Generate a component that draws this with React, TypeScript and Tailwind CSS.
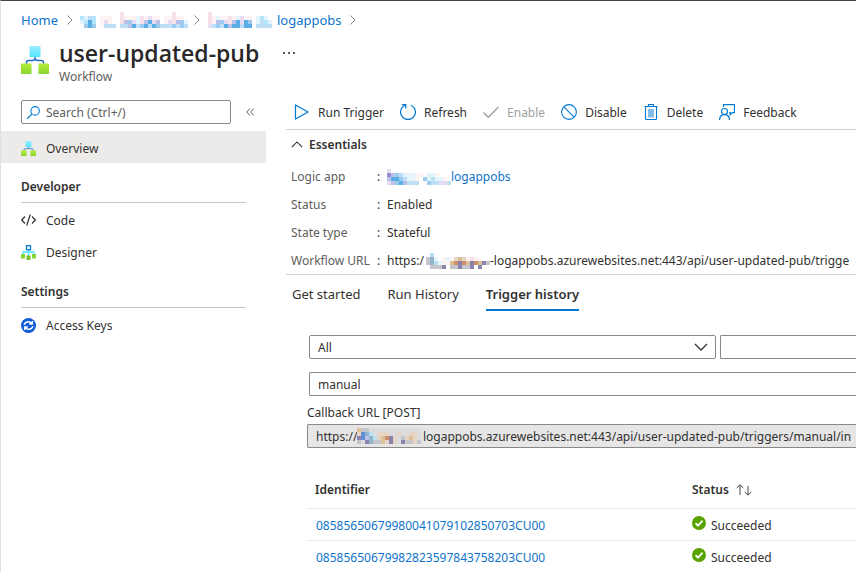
import type { ReactNode } from "react";

const swatches: Record<string, string> = {
  a: "#bcdff6",
  b: "#5aaee6",
  c: "#9ccbed",
  d: "#e2f5fd",
  e: "#fdf3f3",
  f: "#e6dcf3",
  g: "#f8e0e8",
  h: "#b4e6fa",
  i: "#bcc1ea",
  j: "#9a8ad6",
  k: "#dcbf94",
  l: "#8d82ac",
  m: "#cf8f68",
  n: "#c4c6cc",
  o: "#5f8fd0",
  p: "#e6d5c4",
  q: "#8fb4cc",
  r: "#dcdcdf",
};

function Redacted({ rows }: { rows: string[] }) {
  const width = rows[0].length * 4;
  const height = rows.length * 4;
  return (
    <svg
      width={width}
      height={height}
      viewBox={`0 0 ${width} ${height}`}
      shapeRendering="crispEdges"
      className="shrink-0"
      aria-hidden="true"
    >
      {rows.map((row, y) =>
        row
          .split("")
          .map((key, x) =>
            swatches[key] ? (
              <rect key={`${x}-${y}`} x={x * 4} y={y * 4} width={4} height={4} fill={swatches[key]} />
            ) : null,
          ),
      )}
    </svg>
  );
}

function WorkflowIcon({ size }: { size: number }) {
  return (
    <svg width={size} height={size} viewBox="0 0 28 28" className="shrink-0" aria-hidden="true">
      <defs>
        <linearGradient id="wfBlue" x1="0" y1="0" x2="0" y2="1">
          <stop offset="0" stopColor="#9cebff" />
          <stop offset="1" stopColor="#50e6ff" />
        </linearGradient>
        <linearGradient id="wfGreen" x1="0" y1="0" x2="0" y2="1">
          <stop offset="0" stopColor="#b4ec36" />
          <stop offset="1" stopColor="#86d633" />
        </linearGradient>
      </defs>
      <path
        d="M14 10v4M5.500 18v-1.500q0-2 2-2h3.500q2 0 3-1.500q1 1.500 3 1.500h3.500q2 0 2 2V18"
        fill="none"
        stroke="#1f6fc0"
        strokeWidth="1.500"
      />
      <rect x="8.500" y="0" width="11" height="11" rx="0.500" fill="url(#wfBlue)" />
      <rect x="0" y="17.500" width="10.500" height="10.500" rx="0.500" fill="url(#wfGreen)" />
      <rect x="17.500" y="17.500" width="10.500" height="10.500" rx="0.500" fill="url(#wfGreen)" />
    </svg>
  );
}

function Crumb() {
  return (
    <svg width="6" height="10" viewBox="0 0 6 10" className="shrink-0" aria-hidden="true">
      <path d="M0.500 0.500L5 5L0.500 9.500" fill="none" stroke="#8a8886" />
    </svg>
  );
}

function ToolIcon({ children, color = "#0078d4" }: { children: ReactNode; color?: string }) {
  return (
    <svg width="16" height="16" viewBox="0 0 16 16" fill="none" stroke={color} className="shrink-0" aria-hidden="true">
      {children}
    </svg>
  );
}

const tools = [
  {
    label: "Run Trigger",
    icon: (
      <ToolIcon>
        <path d="M1.500 1L14 8L1.500 15Z" strokeWidth="1.200" />
      </ToolIcon>
    ),
  },
  {
    label: "Refresh",
    icon: (
      <ToolIcon>
        <path d="M11 1.200A7.400 7.400 0 1 1 5 1.200M2 .7h3.800v3.800" strokeWidth="1.200" />
      </ToolIcon>
    ),
  },
  {
    label: "Enable",
    disabled: true,
    icon: (
      <ToolIcon color="#a19f9d">
        <path d="M.5 8.500L5.300 13.300L15.500 3" strokeWidth="1.400" />
      </ToolIcon>
    ),
  },
  {
    label: "Disable",
    icon: (
      <ToolIcon>
        <circle cx="8" cy="8" r="7.400" strokeWidth="1.100" />
        <path d="M2.800 2.800L13.200 13.200" strokeWidth="1.100" />
      </ToolIcon>
    ),
  },
  {
    label: "Delete",
    icon: (
      <ToolIcon>
        <rect x="5" y="5" width="6" height="8.500" fill="#83bbe9" stroke="none" />
        <path d="M1.500 2.500h13M5.500 2V.5h5V2M2.500 2.500v12q0 1 1 1h9q1 0 1-1v-12" strokeWidth="1.100" />
      </ToolIcon>
    ),
  },
  {
    label: "Feedback",
    icon: (
      <ToolIcon>
        <circle cx="5.500" cy="7.500" r="3" strokeWidth="1.200" />
        <path d="M.6 16q0-5.300 4.900-5.300T10.400 16M4.500 3V.6h11v8h-2l-2.300 2V8.600H10" strokeWidth="1.200" />
      </ToolIcon>
    ),
  },
];

function Chevron({ className, d }: { className?: string; d: string }) {
  return (
    <svg width="14" height="8" viewBox="0 0 14 8" className={className} aria-hidden="true">
      <path d={d} fill="none" stroke="#323130" strokeWidth="1.300" />
    </svg>
  );
}

function NavItem({ icon, label, active }: { icon: ReactNode; label: string; active?: boolean }) {
  return (
    <a
      href="#"
      className={
        active
          ? "flex h-8 items-center gap-[10px] bg-[#edebe9] pt-[2px] pl-5"
          : "flex h-8 items-center gap-[10px] pl-5"
      }
    >
      {icon}
      <span className="pt-[2px]">{label}</span>
    </a>
  );
}

function NavHeading({ children }: { children: ReactNode }) {
  return (
    <h2 className="mr-5 mb-px ml-5 border-b border-[#c8c6c4] pt-[14px] pb-[5px] leading-5 font-semibold">{children}</h2>
  );
}

function Property({ name, children }: { name: string; children: ReactNode }) {
  return (
    <div className="flex h-7 items-center pt-[2px]">
      <dt className="w-[86px] shrink-0 whitespace-nowrap text-[#605e5c]">{name}</dt>
      <dd className="flex items-center whitespace-nowrap">
        <span className="w-[10px]">:</span>
        {children}
      </dd>
    </div>
  );
}

const runs = ["08585650679980041079102850703CU00", "08585650679982823597843758203CU00"];

export default function App() {
  return (
    <div className="min-h-screen overflow-hidden border-t border-l border-t-[#444444] border-l-[#e1dfdd] bg-white font-['Noto_Sans','Open_Sans',sans-serif] text-[12px] leading-4 text-[#323130]">
      <header className="px-5">
        <nav aria-label="Breadcrumb" className="flex h-9 items-center pt-[2px] text-[13px] text-[#0f74cc]">
          <a href="#" className="w-[46px]">
            Home
          </a>
          <Crumb />
          <a href="#" aria-label="Resource group" className="mr-[6px] ml-[7px]">
            <Redacted
              rows={[
                "..........g............g...",
                "hdah.eee..geeedgefee.eegee.",
                "dhbh.efe..gicfdgibfi.efgicd",
                ".cbc.eaaa.aaibacbabcaaacaca",
              ]}
            />
          </a>
          <Crumb />
          <a href="#" className="flex items-center gap-[5px] pr-2 pl-2">
            <Redacted rows={["g...............", "gedeegedfee.dhd.", "geicfgibfbc.dahd", "facabibbabb.aaaa"]} />
            logappobs
          </a>
          <Crumb />
        </nav>
        <div className="flex h-[58px] items-start gap-[10px]">
          <div className="pt-[9px]">
            <WorkflowIcon size={28} />
          </div>
          <div>
            <h1 className="font-['Open_Sans','Noto_Sans',sans-serif] text-[23px] leading-8 font-semibold text-[#292827]">
              user-updated-pub
            </h1>
            <p className="text-[#605e5c]">Workflow</p>
          </div>
          <button type="button" aria-label="More" className="ml-[14px] flex gap-[3px] pt-[15px]">
            <span className="size-[2px] bg-[#605e5c]" />
            <span className="size-[2px] bg-[#605e5c]" />
            <span className="size-[2px] bg-[#605e5c]" />
          </button>
        </div>
      </header>

      <div className="flex">
        <aside className="w-[265px] shrink-0 pt-[5px]">
          <div className="mb-[7px] flex items-center pl-5">
            <label className="flex h-6 w-[210px] items-center gap-[6px] rounded-[2px] border border-[#8a8886] px-[5px]">
              <svg
                width="13"
                height="13"
                viewBox="0 0 12 12"
                fill="none"
                stroke="#0078d4"
                className="shrink-0"
                aria-hidden="true"
              >
                <circle cx="7.500" cy="4.500" r="3.900" />
                <path d="M4.700 7.300L.4 11.600" strokeWidth="1.200" />
              </svg>
              <input
                type="text"
                aria-label="Search"
                placeholder="Search (Ctrl+/)"
                className="w-full pt-[2px] outline-none placeholder:text-[#605e5c]"
              />
            </label>
            <button type="button" aria-label="Collapse menu" className="ml-[15px]">
              <svg width="9" height="8" viewBox="0 0 9 8" fill="none" stroke="#605e5c" aria-hidden="true">
                <path d="M4 .5L.7 4L4 7.500M8 .5L4.700 4L8 7.500" />
              </svg>
            </button>
          </div>
          <NavItem active label="Overview" icon={<WorkflowIcon size={15} />} />
          <NavHeading>Developer</NavHeading>
          <NavItem
            label="Code"
            icon={
              <svg width="15" height="14" viewBox="0 0 15 14" fill="none" stroke="#323130" aria-hidden="true">
                <path d="M4 3.500L.7 7L4 10.500M11 3.500L14.300 7L11 10.500M9.300 1.500L5.700 12.500" strokeWidth="1.200" />
              </svg>
            }
          />
          <NavItem
            label="Designer"
            icon={
              <svg width="15" height="15" viewBox="0 0 15 15" aria-hidden="true">
                <path d="M7.500 5v6M2 10V7h11v3" fill="none" stroke="#50e6ff" strokeWidth="1.300" />
                <rect x="5.500" y="0.700" width="4" height="4" fill="#fff" stroke="#0078d4" strokeWidth="1.300" />
                <rect x="0" y="9" width="4" height="4.500" fill="#86d633" />
                <rect x="5.500" y="10.500" width="4" height="4.500" fill="#76bc2d" />
                <rect x="11" y="9" width="4" height="4.500" fill="#86d633" />
              </svg>
            }
          />
          <NavHeading>Settings</NavHeading>
          <NavItem
            label="Access Keys"
            icon={
              <svg width="15" height="15" viewBox="0 0 15 15" fill="none" stroke="#fff" aria-hidden="true">
                <circle cx="7.500" cy="7.500" r="7.500" fill="#0f5bd8" stroke="none" />
                <path
                  d="M3 6.800Q4.200 3.700 7.500 3.700Q9.800 3.700 11 5.600M12 8.200Q10.800 11.300 7.500 11.300Q5.200 11.300 4 9.400M11.400 3v3H8.200M3.600 12V9h3.200"
                  strokeWidth="1.400"
                />
              </svg>
            }
          />
        </aside>

        <main className="ml-5 min-w-0 flex-1">
          <div role="toolbar" className="flex h-[35px] items-center gap-4 border-b border-[#d2d0ce] pl-2">
            {tools.map((tool) => (
              <button
                key={tool.label}
                type="button"
                disabled={tool.disabled}
                className="flex items-center gap-2 whitespace-nowrap disabled:text-[#a19f9d]"
              >
                {tool.icon}
                <span className="pt-[2px]">{tool.label}</span>
              </button>
            ))}
          </div>

          <section className="border-b border-[#d2d0ce] pl-[5px]">
            <button type="button" className="flex h-7 items-center gap-[6px] font-semibold">
              <Chevron className="h-[7px] w-3" d="M1 7L7 1L13 7" />
              <span className="pt-[2px]">Essentials</span>
            </button>
            <dl className="pt-1">
              <Property name="Logic app">
                <a href="#" className="flex items-center text-[#0f74cc]">
                  <Redacted rows={["f...............", "jicadddee.dde...", "ibbcadde.cdadde.", "ficbiaaa..caaffa"]} />
                  logappobs
                </a>
              </Property>
              <Property name="Status">Enabled</Property>
              <Property name="State type">Stateful</Property>
              <Property name="Workflow URL">
                <span className="w-[39px]">https:/</span>
                <Redacted rows={[".a..............", "nqd.edepkpegee..", "nqadeekmlmklmkln", ".nnnl.nnlnnl.l.."]} />
                <span>-logappobs.azurewebsites.net:443/api/user-updated-pub/trigge</span>
              </Property>
            </dl>
          </section>

          <div role="tablist" className="flex h-9 gap-[27px] pl-[6px] text-[13px] whitespace-nowrap">
            <button type="button" role="tab" className="border-b-2 border-transparent pt-1">
              Get started
            </button>
            <button type="button" role="tab" className="border-b-2 border-transparent pt-1">
              Run History
            </button>
            <button
              type="button"
              role="tab"
              aria-selected="true"
              className="border-b-2 border-[#0078d4] pt-1 font-semibold"
            >
              Trigger history
            </button>
          </div>

          <div className="pt-6 pl-[21px]">
            <div className="pl-[2px]">
              <div className="mb-[13px] grid grid-cols-[3fr_1fr] gap-1">
                <div className="grid items-center">
                  <select
                    aria-label="Status filter"
                    className="col-start-1 row-start-1 h-6 appearance-none rounded-[2px] border border-[#8a8886] px-2 pt-px"
                  >
                    <option>All</option>
                  </select>
                  <Chevron
                    className="pointer-events-none col-start-1 row-start-1 mr-2 justify-self-end"
                    d="M1 1L7 7L13 1"
                  />
                </div>
                <input
                  type="text"
                  aria-label="Start time"
                  className="h-6 w-full min-w-0 rounded-l-[2px] border border-r-0 border-[#8a8886] px-2"
                />
              </div>
              <input
                type="text"
                aria-label="Trigger name"
                defaultValue="manual"
                className="block h-6 w-full rounded-l-[2px] border border-r-0 border-[#8a8886] px-2"
              />
            </div>
            <label htmlFor="callback" className="mt-[7px] mb-px block leading-5">
              Callback URL [POST]
            </label>
            <div className="flex h-6 items-center rounded-l-[2px] border border-r-0 border-[#8a8886] bg-[#e6e6e6] pl-2">
              <span className="w-[41px] shrink-0 pt-px">https://</span>
              <Redacted rows={["knnrrrrrrrrrrrrr", "poqarppprrprrppr", "loiqapkmlprnpkpr", "nrlqnnkplprlnnpn"]} />
              <input
                id="callback"
                type="text"
                readOnly
                value="logappobs.azurewebsites.net:443/api/user-updated-pub/triggers/manual/in"
                className="ml-[2px] min-w-0 flex-1 pt-px outline-none"
              />
            </div>

            <table className="mt-6 w-full table-fixed border-collapse text-left">
              <thead>
                <tr className="h-9 border-b border-[#edebe9]">
                  <th className="w-[377px] pt-px pl-2 font-semibold">Identifier</th>
                  <th className="pt-px pl-2 font-semibold">
                    <button type="button" className="flex items-center gap-[7px]">
                      Status
                      <svg width="16" height="12" viewBox="0 0 16 12" fill="none" stroke="#484644" aria-hidden="true">
                        <path d="M4 11V1M.7 4L4 .8L7.300 4M12 2v9M8.700 8L12 11.200L15.300 8" />
                      </svg>
                    </button>
                  </th>
                </tr>
              </thead>
              <tbody>
                {runs.map((id) => (
                  <tr key={id} className="h-8 border-b border-[#edebe9]">
                    <td className="pt-1 pl-[9px]">
                      <a href="#" className="text-[#0f74cc]">
                        {id}
                      </a>
                    </td>
                    <td className="pl-2">
                      <div className="flex items-center gap-[5px]">
                        <svg width="14" height="14" viewBox="0 0 14 14" className="mb-[2px]" aria-hidden="true">
                          <circle cx="7" cy="7" r="7" fill="#57a300" />
                          <path d="M3.500 7.200L6 9.700L10.600 4.700" fill="none" stroke="#fff" strokeWidth="1.800" />
                        </svg>
                        <span className="pt-1">Succeeded</span>
                      </div>
                    </td>
                  </tr>
                ))}
              </tbody>
            </table>
          </div>
        </main>
      </div>
    </div>
  );
}
